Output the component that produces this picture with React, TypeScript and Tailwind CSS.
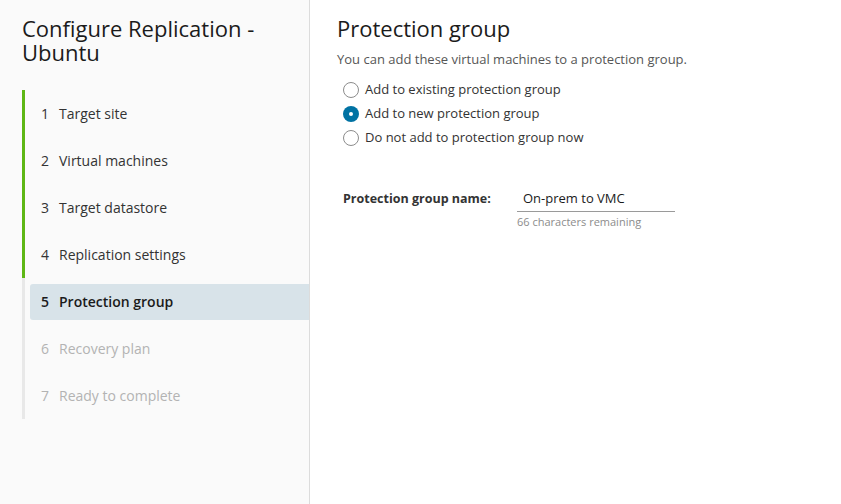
import React from "react";

const steps = [
  { n: 1, label: "Target site", state: "done" },
  { n: 2, label: "Virtual machines", state: "done" },
  { n: 3, label: "Target datastore", state: "done" },
  { n: 4, label: "Replication settings", state: "done" },
  { n: 5, label: "Protection group", state: "active" },
  { n: 6, label: "Recovery plan", state: "todo" },
  { n: 7, label: "Ready to complete", state: "todo" },
];

const options = [
  { label: "Add to existing protection group", checked: false },
  { label: "Add to new protection group", checked: true },
  { label: "Do not add to protection group now", checked: false },
];

function Radio({ checked }: { checked: boolean }) {
  if (checked) {
    return (
      <span className="flex h-4 w-4 shrink-0 items-center justify-center rounded-full bg-[#0072a3]">
        <span className="h-[4px] w-[4px] rounded-full bg-white" />
      </span>
    );
  }
  return <span className="h-4 w-4 shrink-0 rounded-full border border-[#8c8c8c] bg-white" />;
}

export default function App() {
  return (
    <div
      className="flex h-screen w-full bg-white text-[#333]"
      style={{ fontFamily: "'Open Sans', 'Noto Sans', sans-serif" }}
    >
      <aside className="w-[310px] shrink-0 border-r border-[#dcdcdc] bg-[#fafafa]">
        <h1 className="px-[22px] pt-[16px] text-[22px] leading-[24px] text-[#1b1b1b]">
          Configure Replication -<br />
          Ubuntu
        </h1>
        <ol className="mt-[26px] ml-[22px]">
          {steps.map((s) => (
            <li
              key={s.n}
              className={`flex h-[47px] items-center border-l-[3px] ${
                s.state === "done" ? "border-[#5eb715]" : "border-[#e8e8e8]"
              }`}
            >
              <div
                className={`ml-[5px] flex h-[36px] flex-1 items-center rounded-l-[3px] pl-[11px] text-[14px] ${
                  s.state === "active"
                    ? "bg-[#d8e3e9] font-semibold text-[#1b1b1b]"
                    : s.state === "todo"
                    ? "text-[#b3b3b3]"
                    : "text-[#333]"
                }`}
              >
                <span className="mr-[10px]">{s.n}</span>
                <span>{s.label}</span>
              </div>
            </li>
          ))}
        </ol>
      </aside>

      <main className="flex-1 pl-[27px] pt-[14px]">
        <h2 className="text-[22px] leading-[28px] text-[#1b1b1b]">Protection group</h2>
        <p className="mt-[8px] text-[13px] leading-[18px] text-[#565656]">
          You can add these virtual machines to a protection group.
        </p>
        <div className="mt-[10px] flex flex-col pl-[6px]">
          {options.map((o) => (
            <label key={o.label} className="flex h-[24px] items-center gap-[6px] text-[13px] text-[#333]">
              <Radio checked={o.checked} />
              <span>{o.label}</span>
            </label>
          ))}
        </div>

        <div className="mt-[38px] flex pl-[6px]">
          <div className="w-[174px] pt-[2px] text-[12.5px] font-bold text-[#333]">Protection group name:</div>
          <div className="w-[158px]">
            <div className="border-b border-[#9a9a9a] px-[6px] pb-[3px] text-[13px] leading-[20px] text-[#1b1b1b]">
              On-prem to VMC
            </div>
            <div className="mt-[3px] text-[11px] leading-[14px] text-[#8c8c8c]">66 characters remaining</div>
          </div>
        </div>
      </main>
    </div>
  );
}
